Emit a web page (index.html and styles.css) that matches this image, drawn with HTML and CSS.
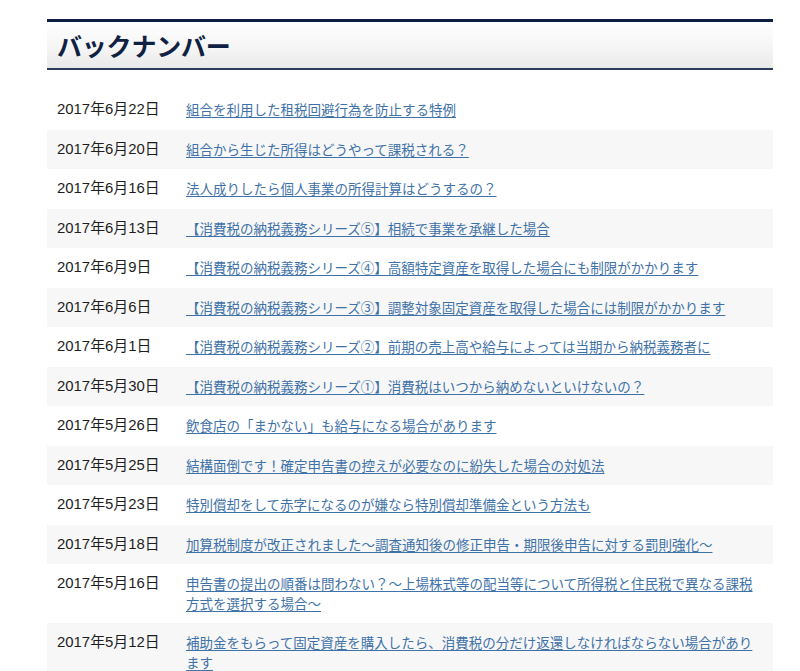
FILE: index.html
```html
<!DOCTYPE html>
<html lang="ja">
<head>
<meta charset="utf-8">
<title>バックナンバー</title>
<link rel="stylesheet" href="styles.css">
</head>
<body>
<div class="page">
  <h2 class="heading">バックナンバー</h2>
  <ul class="list">
    <li class="row"><span class="date">2017年6月22日</span><a class="title" href="#">組合を利用した租税回避行為を防止する特例</a></li>
    <li class="row"><span class="date">2017年6月20日</span><a class="title" href="#">組合から生じた所得はどうやって課税される？</a></li>
    <li class="row"><span class="date">2017年6月16日</span><a class="title" href="#">法人成りしたら個人事業の所得計算はどうするの？</a></li>
    <li class="row"><span class="date">2017年6月13日</span><a class="title" href="#">【消費税の納税義務シリーズ⑤】相続で事業を承継した場合</a></li>
    <li class="row"><span class="date">2017年6月9日</span><a class="title" href="#">【消費税の納税義務シリーズ④】高額特定資産を取得した場合にも制限がかかります</a></li>
    <li class="row"><span class="date">2017年6月6日</span><a class="title" href="#">【消費税の納税義務シリーズ③】調整対象固定資産を取得した場合には制限がかかります</a></li>
    <li class="row"><span class="date">2017年6月1日</span><a class="title" href="#">【消費税の納税義務シリーズ②】前期の売上高や給与によっては当期から納税義務者に</a></li>
    <li class="row"><span class="date">2017年5月30日</span><a class="title" href="#">【消費税の納税義務シリーズ①】消費税はいつから納めないといけないの？</a></li>
    <li class="row"><span class="date">2017年5月26日</span><a class="title" href="#">飲食店の「まかない」も給与になる場合があります</a></li>
    <li class="row"><span class="date">2017年5月25日</span><a class="title" href="#">結構面倒です！確定申告書の控えが必要なのに紛失した場合の対処法</a></li>
    <li class="row"><span class="date">2017年5月23日</span><a class="title" href="#">特別償却をして赤字になるのが嫌なら特別償却準備金という方法も</a></li>
    <li class="row"><span class="date">2017年5月18日</span><a class="title" href="#">加算税制度が改正されました〜調査通知後の修正申告・期限後申告に対する罰則強化〜</a></li>
    <li class="row"><span class="date">2017年5月16日</span><a class="title" href="#">申告書の提出の順番は問わない？〜上場株式等の配当等について所得税と住民税で異なる課税方式を選択する場合〜</a></li>
    <li class="row"><span class="date">2017年5月12日</span><a class="title" href="#">補助金をもらって固定資産を購入したら、消費税の分だけ返還しなければならない場合があります</a></li>
  </ul>
</div>
</body>
</html>
```
FILE: styles.css
```css
html, body {
  margin: 0;
  padding: 0;
  background: #ffffff;
}
body {
  font-family: "Noto Sans CJK JP", "Noto Sans", sans-serif;
  color: #222222;
}
.page {
  width: 726px;
  margin-left: 47px;
  padding-top: 19px;
}
.heading {
  margin: 0;
  height: 46px;
  box-sizing: content-box;
  border-top: 3px solid #0e2142;
  border-bottom: 2px solid #2d3d58;
  background: linear-gradient(to bottom, #ffffff 0%, #f4f4f4 60%, #e9e9e9 100%);
  padding: 0 10px;
  font-size: 25px;
  font-weight: bold;
  line-height: 46px;
  color: #0f2143;
  letter-spacing: -0.2px;
}
.list {
  list-style: none;
  margin: 20px 0 0 0;
  padding: 0;
}
.row {
  display: flex;
  padding: 10px 10px;
  font-size: 13.5px;
  line-height: 19.5px;
}
.row:nth-child(even) {
  background: #f7f7f7;
}
.date {
  flex: 0 0 129px;
  color: #1e1e1e;
  font-family: "Liberation Sans", "Noto Sans CJK JP", sans-serif;
  font-size: 14.9px;
}
.title {
  flex: 1;
  color: #3f72a8;
  text-decoration: underline;
  text-underline-offset: 2px;
}
```
